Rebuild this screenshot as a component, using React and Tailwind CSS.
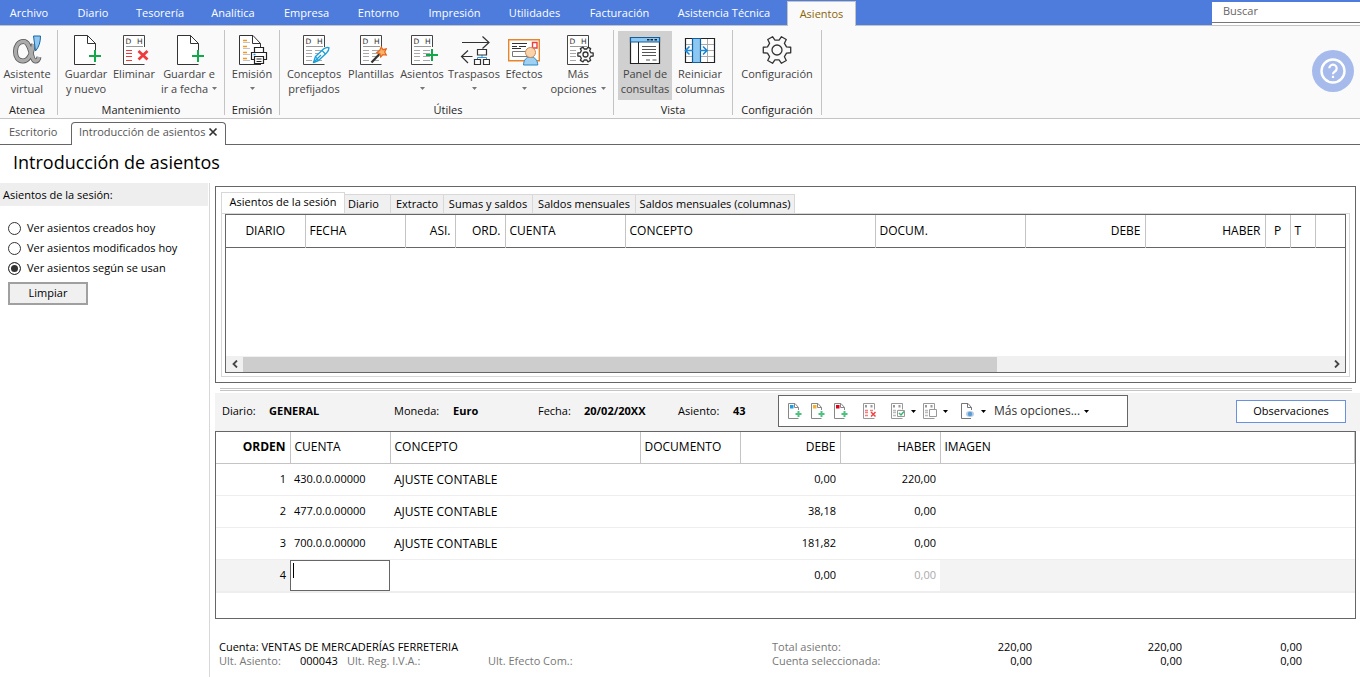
import React from "react";

const MENU = [
  ["Archivo", "w-[58px]"],
  ["Diario", "w-[70px]"],
  ["Tesorería", "w-[64px]"],
  ["Analítica", "w-[82px]"],
  ["Empresa", "w-[65px]"],
  ["Entorno", "w-[79px]"],
  ["Impresión", "w-[73px]"],
  ["Utilidades", "w-[87px]"],
  ["Facturación", "w-[83px]"],
  ["Asistencia Técnica", "w-[126px]"],
];

function Icon({ children }) {
  return (
    <svg viewBox="0 0 32 32" className="-mb-px h-8 w-8 shrink-0" fill="none" aria-hidden="true">
      {children}
    </svg>
  );
}

function gearPath(cx, cy, outer, inner, teeth) {
  const points = [];
  const step = (Math.PI * 2) / teeth;
  for (let i = 0; i < teeth; i++) {
    const a = i * step;
    [
      [-0.3, inner],
      [-0.19, outer],
      [0.19, outer],
      [0.3, inner],
    ].forEach(([f, r]) => {
      points.push(`${(cx + r * Math.cos(a + f * step)).toFixed(2)} ${(cy + r * Math.sin(a + f * step)).toFixed(2)}`);
    });
  }
  return `M${points.join("L")}Z`;
}

function Gear({ cx, cy, outer, inner, hole, width }) {
  return (
    <>
      <path d={gearPath(cx, cy, outer, inner, 6)} fill="#fafafa" stroke="#333" strokeWidth={width} strokeLinejoin="round" />
      <circle cx={cx} cy={cy} r={hole} stroke="#333" strokeWidth={width} />
    </>
  );
}

function Plus({ x, y }) {
  return <path d={`M${x - 6} ${y}h12M${x} ${y - 6}v12`} stroke="#12a84b" strokeWidth="2" />;
}

function BlankDoc() {
  return (
    <>
      <path d="M5 1h12.500l8 8v6l-6 6v8H5z" fill="#fff" />
      <path d="M25.500 15V8.500L17.500 .5H4.500v29h21" stroke="#333" />
      <path d="M17.500 .5v8h8" stroke="#333" />
      <Plus x={25} y={21} />
    </>
  );
}

function LedgerDoc({ lines = "#a9a9a9" }) {
  return (
    <>
      <path d="M5.500 .5h21v29h-21z" fill="#fff" />
      <path d="M26.500 12V.5h-21v29h21" stroke="#444" />
      <text x="7.500" y="8.500" fontSize="7.500" fill="#333" fontFamily="DejaVu Sans">D</text>
      <text x="19" y="8.500" fontSize="7.500" fill="#333" fontFamily="DejaVu Sans">H</text>
      <path d="M8 11.500h17" stroke="#999" />
      <path d="M8 15.500h6M8 18.500h6M8 21.500h6M8 25.500h6" stroke={lines} />
    </>
  );
}

function LedgerLines() {
  return <path d="M17 15.500h7M17 18.500h7M17 21.500h7M17 25.500h7" stroke="#a9a9a9" />;
}

const ALPHA = "M22.500 9c-1.500 8.500-4.500 17-10.500 17C7 26 4.500 22 4.500 16.500S7.500 6.500 12.500 6.500c8 0 7 19.500 12 19.500 2 0 3-1.500 3.500-4";

const icons = {
  alpha: (
    <Icon>
      <path d={ALPHA} stroke="#555" strokeWidth="5" />
      <path d={ALPHA} stroke="#ababab" strokeWidth="3.400" />
      <path d="M22.500 1h7c0 6-1.500 11-5 15z" fill="#8fc7ee" stroke="#1766a8" />
    </Icon>
  ),
  newDoc: <Icon><BlankDoc /></Icon>,
  remove: (
    <Icon>
      <LedgerDoc lines="#ef3b3b" />
      <path d="M20.500 16l9 8.500M29.500 16l-9 8.500" stroke="#ef3b3b" strokeWidth="2.800" />
    </Icon>
  ),
  print: (
    <Icon>
      <path d="M3.500 .5H17L24.500 8.500V29.500h-21z" fill="#fff" />
      <path d="M24.500 12V8.500L17 .5H3.500v29H25M16.500 .5v8h8" stroke="#333" />
      <path d="M7 5.500h4M7 11.500h4M7 17.500h4M7 23.500h4" stroke="#f39a1f" strokeWidth="1.300" />
      <path d="M7 7.500h7M7 13.500h7M7 19.500h7M7 25.500h7" stroke="#c4c4c4" />
      <path d="M18.500 18v-5.500h9V18M18 24.500h-2.500v-7h15v7H28" fill="#fff" stroke="#222" strokeWidth="1.200" />
      <path d="M18.500 21.500h9v7h-9z" fill="#fff" stroke="#222" strokeWidth="1.200" />
      <path d="M20.500 24h5M20.500 26.500h5" stroke="#222" />
      <path d="M17.500 19.500h2" stroke="#1a8fe3" strokeWidth="1.500" />
    </Icon>
  ),
  pen: (
    <Icon>
      <LedgerDoc />
      <LedgerLines />
      <path d="M15.500 27.500l2-6 8-7.500c2-1.800 5-1.500 5.500-1.200-.2 2.500-1 4-2.500 5.200l-8 7.500z" fill="#fff" stroke="#1a9fd9" strokeWidth="1.400" strokeLinejoin="round" />
      <path d="M15.500 27.500l7.500-7.500M17.500 21.500l3 4M24 15.500l3.500 3.500" stroke="#1a9fd9" strokeWidth="1.200" />
    </Icon>
  ),
  wand: (
    <Icon>
      <LedgerDoc />
      <LedgerLines />
      <path d="M16.500 27.500l8-8.500" stroke="#333" strokeWidth="2.200" />
      <path d="M26.300 12l1.700 2.700 3.300-.9-1.600 3.200 1.600 3-3.400-.4-2.200 2.400-.8-3.300-3.100-1.200 2.800-2z" fill="#f9b266" stroke="#e8661b" strokeWidth="1.200" />
    </Icon>
  ),
  add: (
    <Icon>
      <LedgerDoc />
      <LedgerLines />
      <Plus x={26} y={20} />
    </Icon>
  ),
  transfer: (
    <Icon>
      <path d="M4 7.500h26.500M24.500 1.500l6.500 6-6.500 6M14.500 21.500H4M10 15.500l-6.500 6 6.500 6.500" stroke="#333" strokeWidth="1.200" />
      <path d="M24 20v2.500M19.500 24.500v-2h9v2" stroke="#2a97e0" />
      <path d="M19.500 14.500h9v5.500h-9zM16.500 24.500h6v5h-6zM25.500 24.500h6v5h-6z" fill="#fff" stroke="#333" strokeWidth="1.200" />
    </Icon>
  ),
  effects: (
    <Icon>
      <path d="M.7 4.700h30.600v21H.7z" fill="#fff" stroke="#e8842a" strokeWidth="1.400" />
      <path d="M4 8.500h15M4 11.500h5M11 11.500h7M4 13.500h9" stroke="#333" />
      <path d="M4.500 16.500h18v5h-18z" stroke="#777" />
      <path d="M24.500 7.500h4.500v5.500h-4.500z" stroke="#ef3b3b" strokeWidth="1.400" />
      <path d="M15.500 30c.3-5 2.500-8 7-8s7 3 7.300 8z" fill="#9fd0f2" stroke="#2a86c8" />
      <circle cx="22.500" cy="17.500" r="5" fill="#fad3ab" stroke="#c98a52" />
    </Icon>
  ),
  more: (
    <Icon>
      <LedgerDoc />
      <Gear cx={23.500} cy={19.500} outer={7.800} inner={5.600} hole={2.500} width={1.300} />
    </Icon>
  ),
  panel: (
    <Icon>
      <path d="M1.500 2.500h29v26h-29z" fill="#fff" stroke="#222" strokeWidth="1.200" />
      <path d="M1.500 2.500h29v4.500h-29z" fill="#8cc8f2" stroke="#135e9c" strokeWidth="1.200" />
      <path d="M18 4.700h2.500M21.500 4.700H24M25.500 4.700H28" stroke="#222" strokeWidth="1.500" />
      <path d="M9.500 7v21.500" stroke="#222" />
      <path d="M13 11.500h14M13 14.500h14M13 17.500h14M13 20.500h14M17 25h4M23.500 25h4" stroke="#555" />
    </Icon>
  ),
  columns: (
    <Icon>
      <path d="M1.500 3.500h29v24h-29z" fill="#fff" />
      <path d="M1.500 9.500h29M1.500 15.500h29M1.500 21.500h29M23.500 3.500v24" stroke="#aaa" />
      <path d="M1.500 3.500h29v24h-29z" stroke="#222" strokeWidth="1.200" />
      <path d="M8.500 3.500h8v24h-8z" fill="#8cc8f2" stroke="#135e9c" strokeWidth="1.200" />
      <path d="M9 15.500H2M5.500 11.500l-4 4 4 4M16 15.500h7M19 11.500l4 4-4 4" stroke="#1a87d9" strokeWidth="1.600" />
    </Icon>
  ),
  settings: (
    <Icon>
      <Gear cx={16} cy={15} outer={14} inner={10} hole={5} width={1.300} />
    </Icon>
  ),
};

function Caret({ className = "" }) {
  return (
    <svg viewBox="0 0 5 3" className={`inline-block h-[3px] w-[5px] ${className}`} aria-hidden="true">
      <path d="M0 0h5L2.500 3z" fill="currentColor" />
    </svg>
  );
}

function Tool({ icon, lines, width, caret, active }) {
  return (
    <button
      type="button"
      aria-pressed={active}
      className={`flex h-[69px] shrink-0 flex-col items-center pt-1 leading-[15px] whitespace-nowrap text-[#444] ${width} ${active ? "bg-[#d0d0d0]" : ""}`}
    >
      {icons[icon]}
      <span>{lines[0]}</span>
      <span className="flex h-[15px] items-center gap-1">
        {lines[1]}
        {caret && <Caret className="text-[#777]" />}
      </span>
    </button>
  );
}

function Group({ title, width, children, inset = "" }) {
  return (
    <section className={`mt-1 flex h-[85px] shrink-0 flex-col border-r border-[#c4c4c4] pt-px ${width} ${inset}`}>
      <div className="flex justify-center">{children}</div>
      <h2 className="mt-0.5 text-center leading-4 text-[#222]">{title}</h2>
    </section>
  );
}

function SmallIcon({ children }) {
  return (
    <svg viewBox="0 0 16 18" className="h-[18px] w-4" fill="none" aria-hidden="true">
      {children}
    </svg>
  );
}

function SmallNew({ color }) {
  return (
    <SmallIcon>
      <path d="M11.500 8V5.500L8 1.500H1.500v15h10M7.500 1.500v4h4" stroke="#888" />
      <path d="M3 3h3.500v3.500H3z" fill={color} />
      <path d="M8.500 12h6M11.500 9v6" stroke="#4fc07f" strokeWidth="2" />
    </SmallIcon>
  );
}

function SmallLedger({ lines = "#bbb", children }) {
  return (
    <SmallIcon>
      <path d="M12.500 7.500v-6h-11v15h11" stroke="#999" />
      <path d="M3 3h2v2.500H3zM8.500 3h2v2.500h-2z" fill="#999" />
      <path d="M3 8.500h3M3 10.500h3M3 13.500h3M8 8.500h3" stroke={lines} strokeWidth="1.400" />
      {children}
    </SmallIcon>
  );
}

const SESSION_TABS = [
  ["Diario", "w-[46px] pr-2"],
  ["Extracto", "w-[53px]"],
  ["Sumas y saldos", "w-[89px]"],
  ["Saldos mensuales", "w-[103px]"],
  ["Saldos mensuales (columnas)", "w-[159px]"],
];

const SESSION_COLS = [
  ["DIARIO", "w-[79px] text-center"],
  ["FECHA", "w-[100px] text-left"],
  ["ASI.", "w-[50px] text-right"],
  ["ORD.", "w-[50px] text-right"],
  ["CUENTA", "w-[120px] text-left"],
  ["CONCEPTO", "w-[250px] text-left"],
  ["DOCUM.", "w-[150px] text-left"],
  ["DEBE", "w-[120px] text-right"],
  ["HABER", "w-[120px] text-right"],
  ["P", "w-[25px] text-center"],
  ["T", "w-[25px] text-left"],
];

const ROWS = [
  ["1", "430.0.0.00000", "0,00", "220,00"],
  ["2", "477.0.0.00000", "38,18", "0,00"],
  ["3", "700.0.0.00000", "181,82", "0,00"],
];

const ENTRY_COLS = [
  ["ORDEN", "w-[74px] text-right font-bold"],
  ["CUENTA", "w-[100px] text-left font-normal"],
  ["CONCEPTO", "w-[250px] text-left font-normal"],
  ["DOCUMENTO", "w-[100px] text-left font-normal"],
  ["DEBE", "w-[100px] text-right font-normal"],
  ["HABER", "w-[100px] text-right font-normal"],
  ["IMAGEN", "text-left font-normal"],
];

function Field({ label, value, width, labelWidth }) {
  return (
    <div className={`flex ${width}`}>
      <span className={labelWidth}>{label}</span>
      <b className="font-bold">{value}</b>
    </div>
  );
}

export default function App() {
  return (
    <div className="flex min-h-screen w-full flex-col overflow-x-hidden bg-white font-['Open_Sans','Noto_Sans',sans-serif] text-[11px] text-black">
      <header>
        <nav className="flex h-[25px] bg-[#4d7cdc] text-white" aria-label="Menú">
          {MENU.map(([name, width]) => (
            <a key={name} href="#" className={`flex shrink-0 items-center justify-center pt-0.5 ${width}`}>
              {name}
            </a>
          ))}
          <a href="#" className="mt-px flex h-[25px] w-[69px] shrink-0 items-center justify-center border-x border-t border-[#c4c4c4] bg-[#fafafa] text-[#8a6508]">
            Asientos
          </a>
          <div className="ml-auto pt-0.5">
            <input
              aria-label="Buscar"
              placeholder="Buscar"
              className="block h-[21px] w-[148px] border-b border-[#777] bg-white px-[11px] pb-1 text-[11px] outline-none placeholder:text-[#666]"
            />
            <div className="h-0.5 bg-white" />
          </div>
        </nav>
        <div className="flex h-[94px] border-y border-[#c4c4c4] bg-[#fafafa]">
          <Group title="Atenea" width="w-[58px]" inset="pr-[3px]">
            <Tool icon="alpha" lines={["Asistente", "virtual"]} width="w-[52px]" />
          </Group>
          <Group title="Mantenimiento" width="w-[167px]">
            <Tool icon="newDoc" lines={["Guardar", "y nuevo"]} width="w-12" />
            <Tool icon="remove" lines={["Eliminar", ""]} width="w-12" />
            <Tool icon="newDoc" lines={["Guardar e", "ir a fecha"]} width="w-[62px]" caret />
          </Group>
          <Group title="Emisión" width="w-[55px]">
            <Tool icon="print" lines={["Emisión", ""]} width="w-12" caret />
          </Group>
          <Group title="Útiles" width="w-[334px]" inset="pl-[3px]">
            <Tool icon="pen" lines={["Conceptos", "prefijados"]} width="w-[58px]" />
            <Tool icon="wand" lines={["Plantillas", ""]} width="w-14" />
            <Tool icon="add" lines={["Asientos", ""]} width="w-[46px]" caret />
            <Tool icon="transfer" lines={["Traspasos", ""]} width="w-[58px]" caret />
            <Tool icon="effects" lines={["Efectos", ""]} width="w-[42px]" caret />
            <Tool icon="more" lines={["Más", "opciones"]} width="w-[66px]" caret />
          </Group>
          <Group title="Vista" width="w-[119px]">
            <Tool icon="panel" lines={["Panel de", "consultas"]} width="w-[54px]" active />
            <Tool icon="columns" lines={["Reiniciar", "columnas"]} width="w-14" />
          </Group>
          <Group title="Configuración" width="w-[89px]">
            <Tool icon="settings" lines={["Configuración", ""]} width="w-20" />
          </Group>
          <button type="button" aria-label="Ayuda" className="mt-6 mr-1.5 ml-auto h-[42px] w-[42px] shrink-0">
            <svg viewBox="0 0 42 42" className="h-full w-full" fill="none">
              <circle cx="21" cy="21" r="21" fill="#a6bbec" />
              <circle cx="21" cy="21" r="11.500" stroke="#fff" strokeWidth="2.400" />
              <path d="M17.300 18.300a3.700 3.700 0 1 1 5.600 3.200c-1.300.8-1.900 1.400-1.900 2.700" stroke="#fff" strokeWidth="2.200" />
              <path d="M19.900 25.800h2.200V28h-2.200z" fill="#fff" />
            </svg>
          </button>
        </div>
      </header>

      <div className="flex h-[26px] items-end text-[#555]">
        <a href="#" className="h-[22px] w-[71px] shrink-0 border-b border-[#666] pl-[9px] leading-[18px]">Escritorio</a>
        <div className="flex h-[23px] w-[155px] shrink-0 items-start justify-between rounded-t border-x border-t border-[#666] px-[7px] leading-[18px]">
          <span className="whitespace-nowrap">Introducción de asientos</span>
          <button type="button" aria-label="Cerrar" className="flex h-[18px] items-center">
            <svg viewBox="0 0 10 10" className="h-2.5 w-2.5" aria-hidden="true">
              <path d="M1.500 1.500l7 7M8.500 1.500l-7 7" stroke="#333" strokeWidth="1.700" />
            </svg>
          </button>
        </div>
        <div className="h-[22px] flex-1 border-b border-[#666]" />
      </div>

      <h1 className="h-[38px] pt-px pl-[13px] text-[18px] leading-8">Introducción de asientos</h1>

      <div className="flex flex-1">
        <aside className="w-[210px] shrink-0 border-r border-[#d8d8d8]">
          <h2 className="mr-px h-[23px] bg-[#eeeeee] pl-[3px] leading-6">Asientos de la sesión:</h2>
          <fieldset className="mt-3 pl-2">
            {["Ver asientos creados hoy", "Ver asientos modificados hoy", "Ver asientos según se usan"].map((text, i) => (
              <label key={text} className="flex h-5 items-center gap-1.5">
                <input
                  type="radio"
                  name="filtro"
                  defaultChecked={i === 2}
                  className="h-[13px] w-[13px] appearance-none rounded-full border border-[#333] bg-white checked:bg-[#333] checked:shadow-[inset_0_0_0_2px_white]"
                />
                {text}
              </label>
            ))}
          </fieldset>
          <button type="button" className="mt-1 ml-2 h-[23px] w-20 border-2 border-[#a0a0a0] bg-[#f0f0f0]">Limpiar</button>
        </aside>

        <main className="min-w-0 flex-1 pl-[5px]">
          <section className="mt-[3px] mr-1 h-[197px] border border-[#666] p-[5px]">
            <div className="flex items-end" role="tablist">
              <button type="button" role="tab" aria-selected="true" className="h-[21px] w-[124px] border-x border-t border-[#d8d8d8] bg-white pb-px whitespace-nowrap">
                Asientos de la sesión
              </button>
              {SESSION_TABS.map(([name, style]) => (
                <button key={name} type="button" role="tab" aria-selected="false" className={`h-[19px] border-t border-r border-[#d8d8d8] bg-[#f0f0f0] whitespace-nowrap ${style}`}>
                  {name}
                </button>
              ))}
            </div>
            <div className="border border-[#d8d8d8] p-[3px] pt-0">
              <div className="flex h-[159px] flex-col justify-between border border-[#666]">
                <table className="w-full table-fixed border-collapse text-[12px]">
                  <thead>
                    <tr className="h-8 border-b border-[#666]">
                      {SESSION_COLS.map(([name, style]) => (
                        <th key={name} className={`border-r border-r-[#c4c4c4] px-1 font-normal ${style}`}>{name}</th>
                      ))}
                      <th aria-label="Otros" />
                    </tr>
                  </thead>
                </table>
                <div className="flex h-4 items-center bg-[#f0f0f0]">
                  <button type="button" aria-label="Desplazar a la izquierda" className="flex w-[17px] justify-center">
                    <svg viewBox="0 0 6 8" className="h-2 w-1.5" fill="none"><path d="M5 .5L1.500 4 5 7.500" stroke="#444" strokeWidth="1.800" /></svg>
                  </button>
                  <div className="flex h-[15px] flex-1">
                    <div className="w-[69.500%] bg-[#cdcdcd]" />
                  </div>
                  <button type="button" aria-label="Desplazar a la derecha" className="flex w-[17px] justify-center">
                    <svg viewBox="0 0 6 8" className="h-2 w-1.5" fill="none"><path d="M1 .5L4.500 4 1 7.500" stroke="#444" strokeWidth="1.800" /></svg>
                  </button>
                </div>
              </div>
            </div>
          </section>

          <div className="mt-[5px] mr-2 ml-[5px] h-[3px] border-y border-[#c4c4c4]" />

          <div className="mt-0.5 flex h-[38px] items-center bg-[#f3f3f3] pb-0.5 pl-[7px]">
            <Field label="Diario:" value="GENERAL" width="w-[172px]" labelWidth="w-[47px]" />
            <Field label="Moneda:" value="Euro" width="w-36" labelWidth="w-[59px]" />
            <Field label="Fecha:" value="20/02/20XX" width="w-[140px]" labelWidth="w-[46px]" />
            <Field label="Asiento:" value="43" width="w-[100px]" labelWidth="w-[55px]" />
            <div className="flex h-8 w-[350px] shrink-0 items-center border border-[#666] bg-white pl-2 text-[12px]">
              <button type="button" aria-label="Nuevo apunte" className="w-[23px]"><SmallNew color="#1a9fe0" /></button>
              <button type="button" aria-label="Insertar apunte" className="w-[23px]"><SmallNew color="#f5b02e" /></button>
              <button type="button" aria-label="Duplicar apunte" className="w-[29px]"><SmallNew color="#e0001b" /></button>
              <button type="button" aria-label="Eliminar apunte" className="w-7">
                <SmallLedger lines="#f08080">
                  <path d="M9 10l4.500 4.500M13.500 10L9 14.500" stroke="#ee4444" strokeWidth="1.500" />
                </SmallLedger>
              </button>
              <button type="button" aria-label="Marcar" className="flex w-8 items-center gap-[5px]">
                <SmallLedger>
                  <path d="M7.500 8.500h7v6h-7z" fill="#fff" stroke="#999" />
                  <path d="M9 11l2 2 3-3.500" stroke="#3cb371" strokeWidth="1.400" />
                </SmallLedger>
                <Caret />
              </button>
              <button type="button" aria-label="Desmarcar" className="flex w-[38px] items-center gap-[5px]">
                <SmallLedger>
                  <path d="M7.500 7.500h7v7h-7z" fill="#fff" stroke="#999" />
                </SmallLedger>
                <Caret />
              </button>
              <button type="button" aria-label="Ver documento" className="flex w-[34px] items-center gap-[5px]">
                <SmallIcon>
                  <path d="M11.500 8V5.500L8 1.500H1.500v15H11M7.500 1.500v4h4" stroke="#777" />
                  <ellipse cx="10" cy="12" rx="4" ry="3" fill="#b5cde6" />
                  <circle cx="10" cy="12" r="2.200" fill="#5f9bd3" />
                </SmallIcon>
                <Caret />
              </button>
              <button type="button" className="flex items-center gap-1 whitespace-nowrap text-[#333]">
                Más opciones... <Caret className="text-black" />
              </button>
            </div>
            <button type="button" className="mr-3.5 ml-auto h-[23px] w-[110px] border border-[#6a90e0] bg-white">Observaciones</button>
          </div>

          <div className="mr-1 h-[188px] border border-[#666]">
            <table className="w-full table-fixed border-collapse">
              <thead>
                <tr className="h-[31px] border-b border-[#c4c4c4] text-[12px]">
                  {ENTRY_COLS.map(([name, style]) => (
                    <th key={name} className={`border-r border-[#c4c4c4] px-1 ${style}`}>{name}</th>
                  ))}
                </tr>
              </thead>
              <tbody>
                {ROWS.map(([n, account, debit, credit]) => (
                  <tr key={n} className="h-8 border-b border-[#eeeeee]">
                    <td className="px-1 pt-px text-right">{n}</td>
                    <td className="px-1 pt-px">{account}</td>
                    <td className="px-1 pt-px text-[12px]">AJUSTE CONTABLE</td>
                    <td />
                    <td className="px-1 pt-px text-right">{debit}</td>
                    <td className="px-1 pt-px text-right">{credit}</td>
                    <td />
                  </tr>
                ))}
                <tr className="h-8 border-b-2 border-[#eeeeee]">
                  <td className="bg-[#f3f3f3] px-1 pt-px text-right">4</td>
                  <td>
                    <div className="flex h-[31px] border border-[#666] pt-0.5 pl-0.5">
                      <div className="h-[15px] w-px bg-black" />
                      <input aria-label="Cuenta" className="w-full min-w-0 outline-none" />
                    </div>
                  </td>
                  <td />
                  <td />
                  <td className="px-1 pt-px text-right">0,00</td>
                  <td className="px-1 pt-px text-right text-[#aaa]">0,00</td>
                  <td className="bg-[#f3f3f3]" />
                </tr>
              </tbody>
            </table>
          </div>

          <footer className="mt-[21px] flex pl-1 leading-[14px] whitespace-nowrap text-[#777]">
            <div className="w-[553px] shrink-0">
              <p className="text-black">Cuenta: VENTAS DE MERCADERÍAS FERRETERIA</p>
              <p className="flex">
                <span className="w-[81px]">Ult. Asiento:</span>
                <span className="w-[47px] text-black">000043</span>
                <span className="w-[141px]">Ult. Reg. I.V.A.:</span>
                <span>Ult. Efecto Com.:</span>
              </p>
            </div>
            <dl className="grid grid-cols-[140px_120px_150px_120px] text-right text-black">
              <dt className="text-left text-[#777]">Total asiento:</dt>
              <dd>220,00</dd>
              <dd>220,00</dd>
              <dd>0,00</dd>
              <dt className="text-left text-[#777]">Cuenta seleccionada:</dt>
              <dd>0,00</dd>
              <dd>0,00</dd>
              <dd>0,00</dd>
            </dl>
          </footer>
        </main>
      </div>
    </div>
  );
}
